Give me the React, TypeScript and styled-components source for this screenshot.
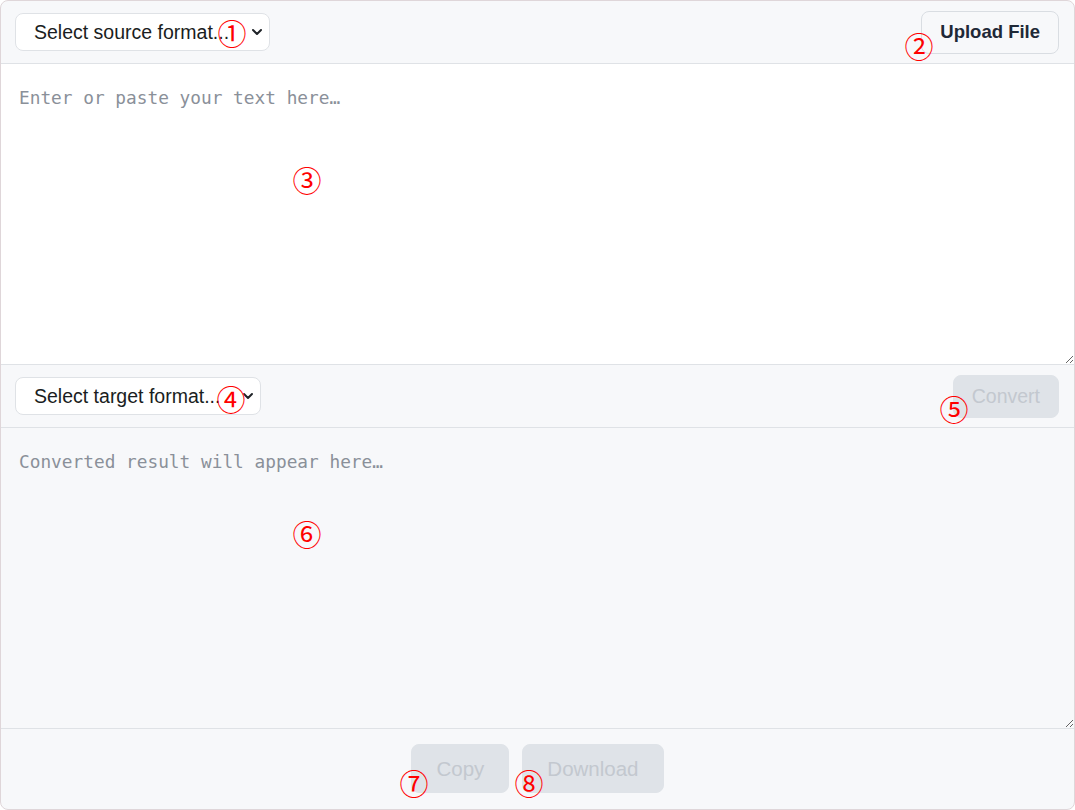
import styled, { createGlobalStyle } from "styled-components";

const GlobalStyle = createGlobalStyle`
  html, body {
    margin: 0;
    padding: 0;
    background: #ffffff;
  }
  * {
    box-sizing: border-box;
  }
`;

const Frame = styled.div`
  position: relative;
  width: 1075px;
  height: 810px;
  display: flex;
  flex-direction: column;
  background: #f7f8fa;
  border: 1px solid #dfd6d9;
  border-radius: 8px;
  overflow: hidden;
  font-family: "Liberation Sans", Arial, sans-serif;
`;

const Toolbar = styled.div`
  height: 63px;
  flex: none;
  display: flex;
  align-items: center;
  justify-content: space-between;
  padding: 0 15px 0 14px;
  border-bottom: 1px solid #dfe2e6;
`;

const SelectWrap = styled.div<{ $width: number }>`
  position: relative;
  width: ${(p) => p.$width}px;
  height: 38px;
`;

const Select = styled.select`
  appearance: none;
  width: 100%;
  height: 100%;
  padding: 0 34px 0 18px;
  border: 1px solid #dfe2e6;
  border-radius: 8px;
  background: #ffffff;
  color: #1a1d21;
  font-family: "Liberation Sans", Arial, sans-serif;
  font-size: 19.5px;
  text-overflow: ellipsis;
  outline: none;
`;

const Chevron = styled.svg`
  position: absolute;
  right: 6px;
  top: 12px;
  width: 14px;
  height: 14px;
  pointer-events: none;
`;

const Button = styled.button<{ $primary?: boolean; $tall?: boolean }>`
  height: ${(p) => (p.$tall ? 49 : 43)}px;
  padding: 0 ${(p) => (p.$tall ? 24 : 18)}px;
  border-radius: 8px;
  font-family: "Liberation Sans", Arial, sans-serif;
  font-size: ${(p) => (p.$tall ? 20.5 : p.$primary ? 18.5 : 19.5)}px;
  border: 1px solid ${(p) => (p.$primary ? "#d9dde2" : "#dfe3e8")};
  background: ${(p) => (p.$primary ? "#f7f8fa" : "#dfe3e8")};
  color: ${(p) => (p.$primary ? "#1f2937" : "#c3c8cf")};
  font-weight: ${(p) => (p.$primary ? 700 : 400)};
  cursor: ${(p) => (p.$primary ? "pointer" : "default")};
`;

const Editor = styled.textarea<{ $readOnly?: boolean }>`
  display: block;
  width: 100%;
  height: 301px;
  flex: none;
  margin: 0;
  padding: 21px 18px;
  border: none;
  border-bottom: 1px solid #dfe2e6;
  outline: none;
  background: ${(p) => (p.$readOnly ? "#f7f8fa" : "#ffffff")};
  font-family: "DejaVu Sans Mono", "Liberation Mono", monospace;
  font-size: 17.8px;
  line-height: 1.5;
  color: #1f2328;
  resize: vertical;

  &::placeholder {
    color: #8a9099;
  }
`;

const Footer = styled.div`
  flex: 1;
  display: flex;
  justify-content: center;
  align-items: flex-start;
  gap: 13px;
  padding-top: 15px;
`;

const Marker = styled.span<{ $x: number; $y: number }>`
  position: absolute;
  left: ${(p) => p.$x}px;
  top: ${(p) => p.$y}px;
  transform: translate(-50%, -50%);
  font-family: "Noto Sans CJK JP", "DejaVu Sans", sans-serif;
  font-size: 29px;
  font-weight: 400;
  line-height: 1;
  color: #ff0000;
  pointer-events: none;
`;

const ChevronIcon = () => (
  <Chevron viewBox="0 0 14 14">
    <path
      d="M3 5l4 4 4-4"
      fill="none"
      stroke="#1f2328"
      strokeWidth="2"
      strokeLinecap="round"
      strokeLinejoin="round"
    />
  </Chevron>
);

const markers = [
  { n: "①", x: 231, y: 31 },
  { n: "②", x: 918, y: 44 },
  { n: "③", x: 306, y: 178 },
  { n: "④", x: 230, y: 397 },
  { n: "⑤", x: 953, y: 407 },
  { n: "⑥", x: 306, y: 532 },
  { n: "⑦", x: 413, y: 781 },
  { n: "⑧", x: 528, y: 781 },
];

const App = () => {
  return (
    <>
      <GlobalStyle />
      <Frame>
        <Toolbar>
          <SelectWrap $width={255}>
            <Select defaultValue="">
              <option value="">Select source format...</option>
              <option value="json">JSON</option>
              <option value="yaml">YAML</option>
              <option value="xml">XML</option>
            </Select>
            <ChevronIcon />
          </SelectWrap>
          <Button $primary>Upload File</Button>
        </Toolbar>
        <Editor placeholder="Enter or paste your text here…" />
        <Toolbar>
          <SelectWrap $width={246}>
            <Select defaultValue="">
              <option value="">Select target format...</option>
              <option value="json">JSON</option>
              <option value="yaml">YAML</option>
              <option value="xml">XML</option>
            </Select>
            <ChevronIcon />
          </SelectWrap>
          <Button disabled>Convert</Button>
        </Toolbar>
        <Editor $readOnly readOnly placeholder="Converted result will appear here…" />
        <Footer>
          <Button $tall disabled>
            Copy
          </Button>
          <Button $tall disabled>
            Download
          </Button>
        </Footer>
        {markers.map((m) => (
          <Marker key={m.n} $x={m.x} $y={m.y}>
            {m.n}
          </Marker>
        ))}
      </Frame>
    </>
  );
};

export default App;
